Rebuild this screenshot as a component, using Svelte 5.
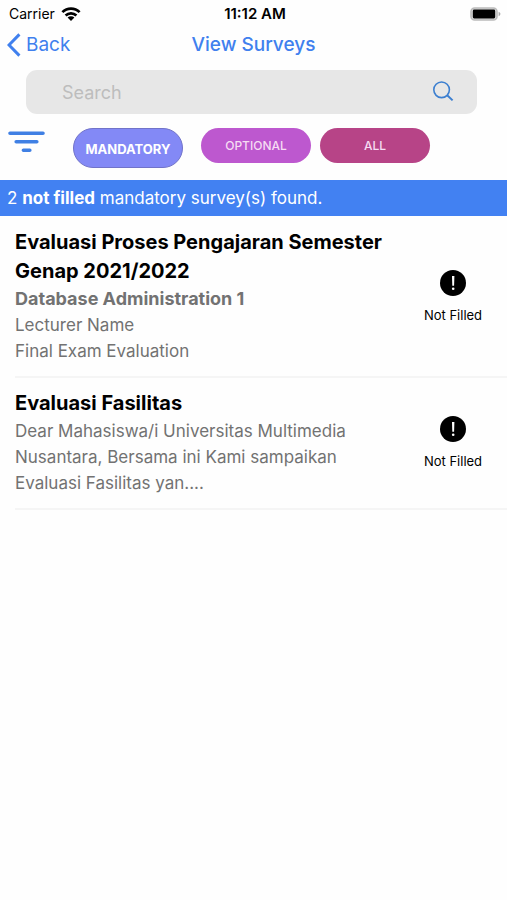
<script>
  let query = $state('')
  let active = $state('mandatory')

  const filters = [
    { id: 'mandatory', label: 'MANDATORY' },
    { id: 'optional', label: 'OPTIONAL' },
    { id: 'all', label: 'ALL' }
  ]

  const surveys = [
    {
      id: 1,
      title: 'Evaluasi Proses Pengajaran Semester Genap 2021/2022',
      course: 'Database Administration 1',
      lines: ['Lecturer Name', 'Final Exam Evaluation'],
      status: 'Not Filled'
    },
    {
      id: 2,
      title: 'Evaluasi Fasilitas',
      lines: ['Dear Mahasiswa/i Universitas Multimedia Nusantara, Bersama ini Kami sampaikan Evaluasi Fasilitas yan....'],
      status: 'Not Filled'
    }
  ]

  const shown = $derived(surveys.filter(s => s.title.toLowerCase().includes(query.toLowerCase())))
</script>

<div class="screen">
  <div class="status-bar">
    <div class="carrier">
      <span>Carrier</span>
      <svg width="20" height="14" viewBox="0 0 20 14" aria-hidden="true">
        <g fill="none" stroke="#000" stroke-width="2.7">
          <path d="M1.4 5.1a12.2 12.2 0 0 1 17.2 0" />
          <path d="M4.6 8.5a7.7 7.7 0 0 1 10.8 0" />
        </g>
        <path d="M6.6 10.6a4.8 4.8 0 0 1 6.8 0L10 14z" />
      </svg>
    </div>
    <time>11:12 AM</time>
    <div class="battery">
      <svg width="31" height="14" viewBox="0 0 31 14" aria-hidden="true">
        <rect x="1" y="1" width="26" height="12" rx="3.6" fill="#ddd" stroke="#bbb" stroke-width="1.6" />
        <rect x="2.8" y="2.6" width="22.4" height="8.8" rx="1.4" />
        <path d="M28.6 4.8c2.4.8 2.4 3.6 0 4.4z" fill="#aaa" />
      </svg>
    </div>
  </div>

  <header>
    <button class="back">
      <svg width="14" height="24" viewBox="0 0 14 24" aria-hidden="true">
        <path d="M12.4 1.4 2 12l10.4 10.6" fill="none" stroke="#4080ee" stroke-width="3" />
      </svg>
      Back
    </button>
    <h1>View Surveys</h1>
  </header>

  <form class="search" onsubmit={e => e.preventDefault()}>
    <input type="text" placeholder="Search" aria-label="Search" bind:value={query} />
    <button aria-label="Submit search">
      <svg width="22" height="22" viewBox="0 0 22 22" fill="none" stroke="#3c7fd0" stroke-width="1.6" aria-hidden="true">
        <circle cx="9.6" cy="8.8" r="7.8" />
        <path d="m15.2 14.2 5.4 5.2" stroke-width="2" />
      </svg>
    </button>
  </form>

  <div class="filters">
    <button class="sort" aria-label="Sort">
      <svg width="37" height="22" viewBox="0 0 37 22" stroke="#4080e4" stroke-width="3.6" stroke-linecap="round" aria-hidden="true">
        <path d="M2 2.2h33M8.2 10.8h20.6M15.4 19.2h6.4" />
      </svg>
    </button>
    <div class="chips">
      {#each filters as filter (filter.id)}
        <button
          class="chip {filter.id}"
          class:active={active === filter.id}
          aria-pressed={active === filter.id}
          onclick={() => (active = filter.id)}
        >
          {filter.label}
        </button>
      {/each}
    </div>
  </div>

  <p class="banner">{shown.length} <b>not filled</b> mandatory survey(s) found.</p>

  <ul class="surveys">
    {#each shown as survey (survey.id)}
      <li>
        <div class="info">
          <h2>{survey.title}</h2>
          {#if survey.course}
            <p class="course">{survey.course}</p>
          {/if}
          {#each survey.lines as line}
            <p>{line}</p>
          {/each}
        </div>
        <div class="status">
          <svg width="26" height="26" viewBox="0 0 26 26" aria-hidden="true">
            <circle cx="13" cy="13" r="13" />
            <path d="M12 6h2.4l-.3 9.8h-1.8z" fill="#fff" />
            <circle cx="13.2" cy="18.8" r="1.3" fill="#fff" />
          </svg>
          <span>{survey.status}</span>
        </div>
      </li>
    {/each}
  </ul>
</div>

<style>
  :global(body) {
    margin: 0;
    background: #fefefe;
  }

  .screen {
    min-height: 100vh;
    font-family: Inter, Roboto, sans-serif;
    color: #000;
  }

  h1,
  h2,
  p,
  ul {
    margin: 0;
    padding: 0;
  }

  button {
    display: flex;
    align-items: center;
    justify-content: center;
    padding: 0;
    border: 0;
    background: none;
    font: inherit;
    cursor: pointer;
  }

  .status-bar {
    display: grid;
    grid-template-columns: 1fr auto 1fr;
    align-items: center;
    height: 27px;
    padding: 0 6px 0 9px;
    font-size: 14px;
  }

  .status-bar time {
    font-size: 15px;
    font-weight: 600;
  }

  .carrier {
    display: flex;
    align-items: center;
    gap: 6px;
  }

  .battery {
    display: flex;
    justify-content: flex-end;
  }

  header {
    display: grid;
    grid-template-columns: 1fr auto 1fr;
    align-items: center;
    height: 35px;
    padding: 0 7px;
    color: #4080ee;
  }

  .back {
    justify-self: start;
    gap: 5px;
    color: inherit;
    font-size: 19px;
  }

  h1 {
    font-size: 19px;
    font-weight: 500;
  }

  .search {
    display: flex;
    align-items: center;
    height: 44px;
    margin: 8px 30px 14px 26px;
    padding: 0 23px 0 36px;
    border-radius: 11px;
    background: #e7e7e7;
  }

  .search input {
    flex: 1;
    min-width: 0;
    padding: 0;
    border: 0;
    outline: 0;
    background: none;
    font: inherit;
    font-size: 18px;
  }

  .search input::placeholder {
    color: #bdbdbd;
  }

  .filters {
    display: flex;
    align-items: flex-start;
    gap: 28px;
    padding: 0 8px 12px;
  }

  .sort {
    padding-top: 3px;
  }

  .chips {
    display: flex;
    align-items: flex-start;
    gap: 9px;
  }

  .chip {
    width: 110px;
    height: 35px;
    border-radius: 20px;
    color: #f6dcf3;
    font-size: 12px;
    font-weight: 500;
  }

  .chip.active {
    height: 40px;
    margin-right: 9px;
    border: 1px solid #7173c9;
    padding-top: 2px;
    color: #fff;
    font-size: 13px;
    font-weight: 700;
  }

  .mandatory {
    background: #8389f6;
  }

  .optional {
    background: #bd58cf;
  }

  .all {
    background: #b74487;
  }

  .banner {
    padding: 0 7px;
    background: #4281f2;
    color: #fff;
    font-size: 17px;
    line-height: 36px;
  }

  .surveys {
    padding: 1px 0 0 15px;
    list-style: none;
  }

  li {
    display: flex;
    align-items: center;
    padding: 11px 0 12px;
    border-bottom: 2px solid #f5f5f5;
  }

  .info {
    flex: 1;
    padding-right: 12px;
    color: #727272;
    font-size: 17px;
    line-height: 26px;
  }

  h2 {
    color: #000;
    font-size: 20px;
    font-weight: 700;
    line-height: 29px;
  }

  .course {
    font-size: 18px;
    font-weight: 700;
  }

  .status {
    display: flex;
    flex-direction: column;
    align-items: center;
    gap: 11px;
    width: 108px;
    font-size: 13px;
    line-height: 16px;
  }
</style>
